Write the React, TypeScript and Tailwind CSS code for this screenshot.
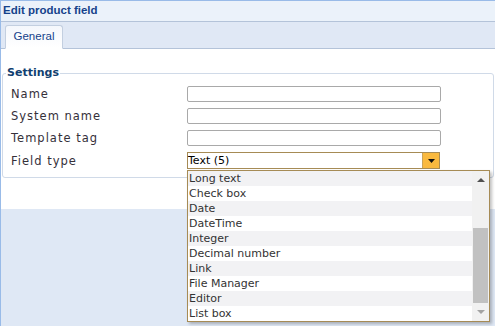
import React from 'react';

const fieldTypes = [
  'Long text',
  'Check box',
  'Date',
  'DateTime',
  'Integer',
  'Decimal number',
  'Link',
  'File Manager',
  'Editor',
  'List box',
];

function FormRow({ label, children }: { label: string; children: React.ReactNode }) {
  return (
    <div className="flex items-center">
      <div className="w-[184px] pl-[8px] text-[11.5px] leading-[16px] tracking-[1px] text-[#35303a]">{label}</div>
      {children}
    </div>
  );
}

function TextInput() {
  return (
    <input
      type="text"
      className="w-[254px] h-[16px] border border-[#a9a9a9] rounded-[2px] bg-white outline-none"
    />
  );
}

function FieldTypeList() {
  return (
    <div className="absolute left-[186px] top-[169px] w-[303px] h-[152px] bg-white border border-[#a68b55] shadow-[2px_2px_3px_rgba(0,0,0,0.25)] flex text-[11px]">
      <ul className="flex-1">
        {fieldTypes.map((t, i) => (
          <li
            key={t}
            className={`h-[15px] leading-[15px] pl-[1px] text-[#333] ${i % 2 === 0 ? 'bg-[#f2f2f4]' : 'bg-white'}`}
          >
            {t}
          </li>
        ))}
      </ul>
      {/* scrollbar */}
      <div className="w-[17px] bg-[#f1f1f1] flex flex-col items-center">
        <div className="h-[17px] flex items-center justify-center">
          <svg width="8" height="5" viewBox="0 0 8 5">
            <path d="M0 5 L4 1 L8 5 Z" fill="#505050" />
          </svg>
        </div>
        <div className="flex-1 w-full flex flex-col justify-end px-[1px]">
          <div className="h-[75px] bg-[#c1c1c1] mb-[1px]" />
        </div>
        <div className="h-[17px] flex items-center justify-center">
          <svg width="8" height="5" viewBox="0 0 8 5">
            <path d="M0 0 L4 4 L8 0 Z" fill="#a3a3a3" />
          </svg>
        </div>
      </div>
    </div>
  );
}

export default function App() {
  return (
    <div
      className="relative w-[495px] h-[326px] overflow-hidden bg-[#dfe8f5] border-l border-t border-[#99bbe8]"
      style={{ fontFamily: '"DejaVu Sans", Verdana, sans-serif' }}
    >
      {/* Title */}
      <div
        className="h-[21px] bg-[#ebf2fa] border-b border-[#b4c3d9] flex items-center pl-[2px] font-bold text-[11.5px] text-[#15428b]"
        style={{ fontFamily: '"Liberation Sans", Arial, sans-serif' }}
      >
        Edit product field
      </div>

      {/* Tabs */}
      <div className="h-[27px] bg-[#e0e8f5] border-b border-[#b4c3d9] flex items-end pl-[4px]">
        <div
          className="h-[24px] w-[58px] -mb-px border border-[#c3cfe0] border-b-white rounded-t-[3px] flex items-center justify-center text-[11.5px] text-[#15428b] bg-gradient-to-b from-[#f4f7fc] to-white"
          style={{ fontFamily: '"Liberation Sans", Arial, sans-serif' }}
        >
          General
        </div>
      </div>

      {/* Content */}
      <div className="h-[160px] bg-white pt-[17px] px-[1px]">
        <fieldset className="border border-[#d0dae8] rounded-[3px] px-0 h-[112px]">
          <legend className="ml-[3px] px-[1px] font-bold text-[11px] text-[#123f70] leading-[14px]">
            Settings
          </legend>
          <div className="pt-[6px] flex flex-col gap-[6px]">
            <FormRow label="Name">
              <TextInput />
            </FormRow>
            <FormRow label="System name">
              <TextInput />
            </FormRow>
            <FormRow label="Template tag">
              <TextInput />
            </FormRow>
            <FormRow label="Field type">
              <div className="w-[253px] h-[17px] border border-[#a68b55] bg-white flex text-[11px]">
                <div className="flex-1 leading-[15px] text-black">Text (5)</div>
                <div className="w-[17px] bg-[#f9b93f] border-l border-[#c9a35a] flex items-center justify-center">
                  <svg width="7" height="4" viewBox="0 0 7 4">
                    <path d="M0 0 L7 0 L3.5 4 Z" fill="#111" />
                  </svg>
                </div>
              </div>
            </FormRow>
          </div>
        </fieldset>
      </div>

      <FieldTypeList />
    </div>
  );
}
